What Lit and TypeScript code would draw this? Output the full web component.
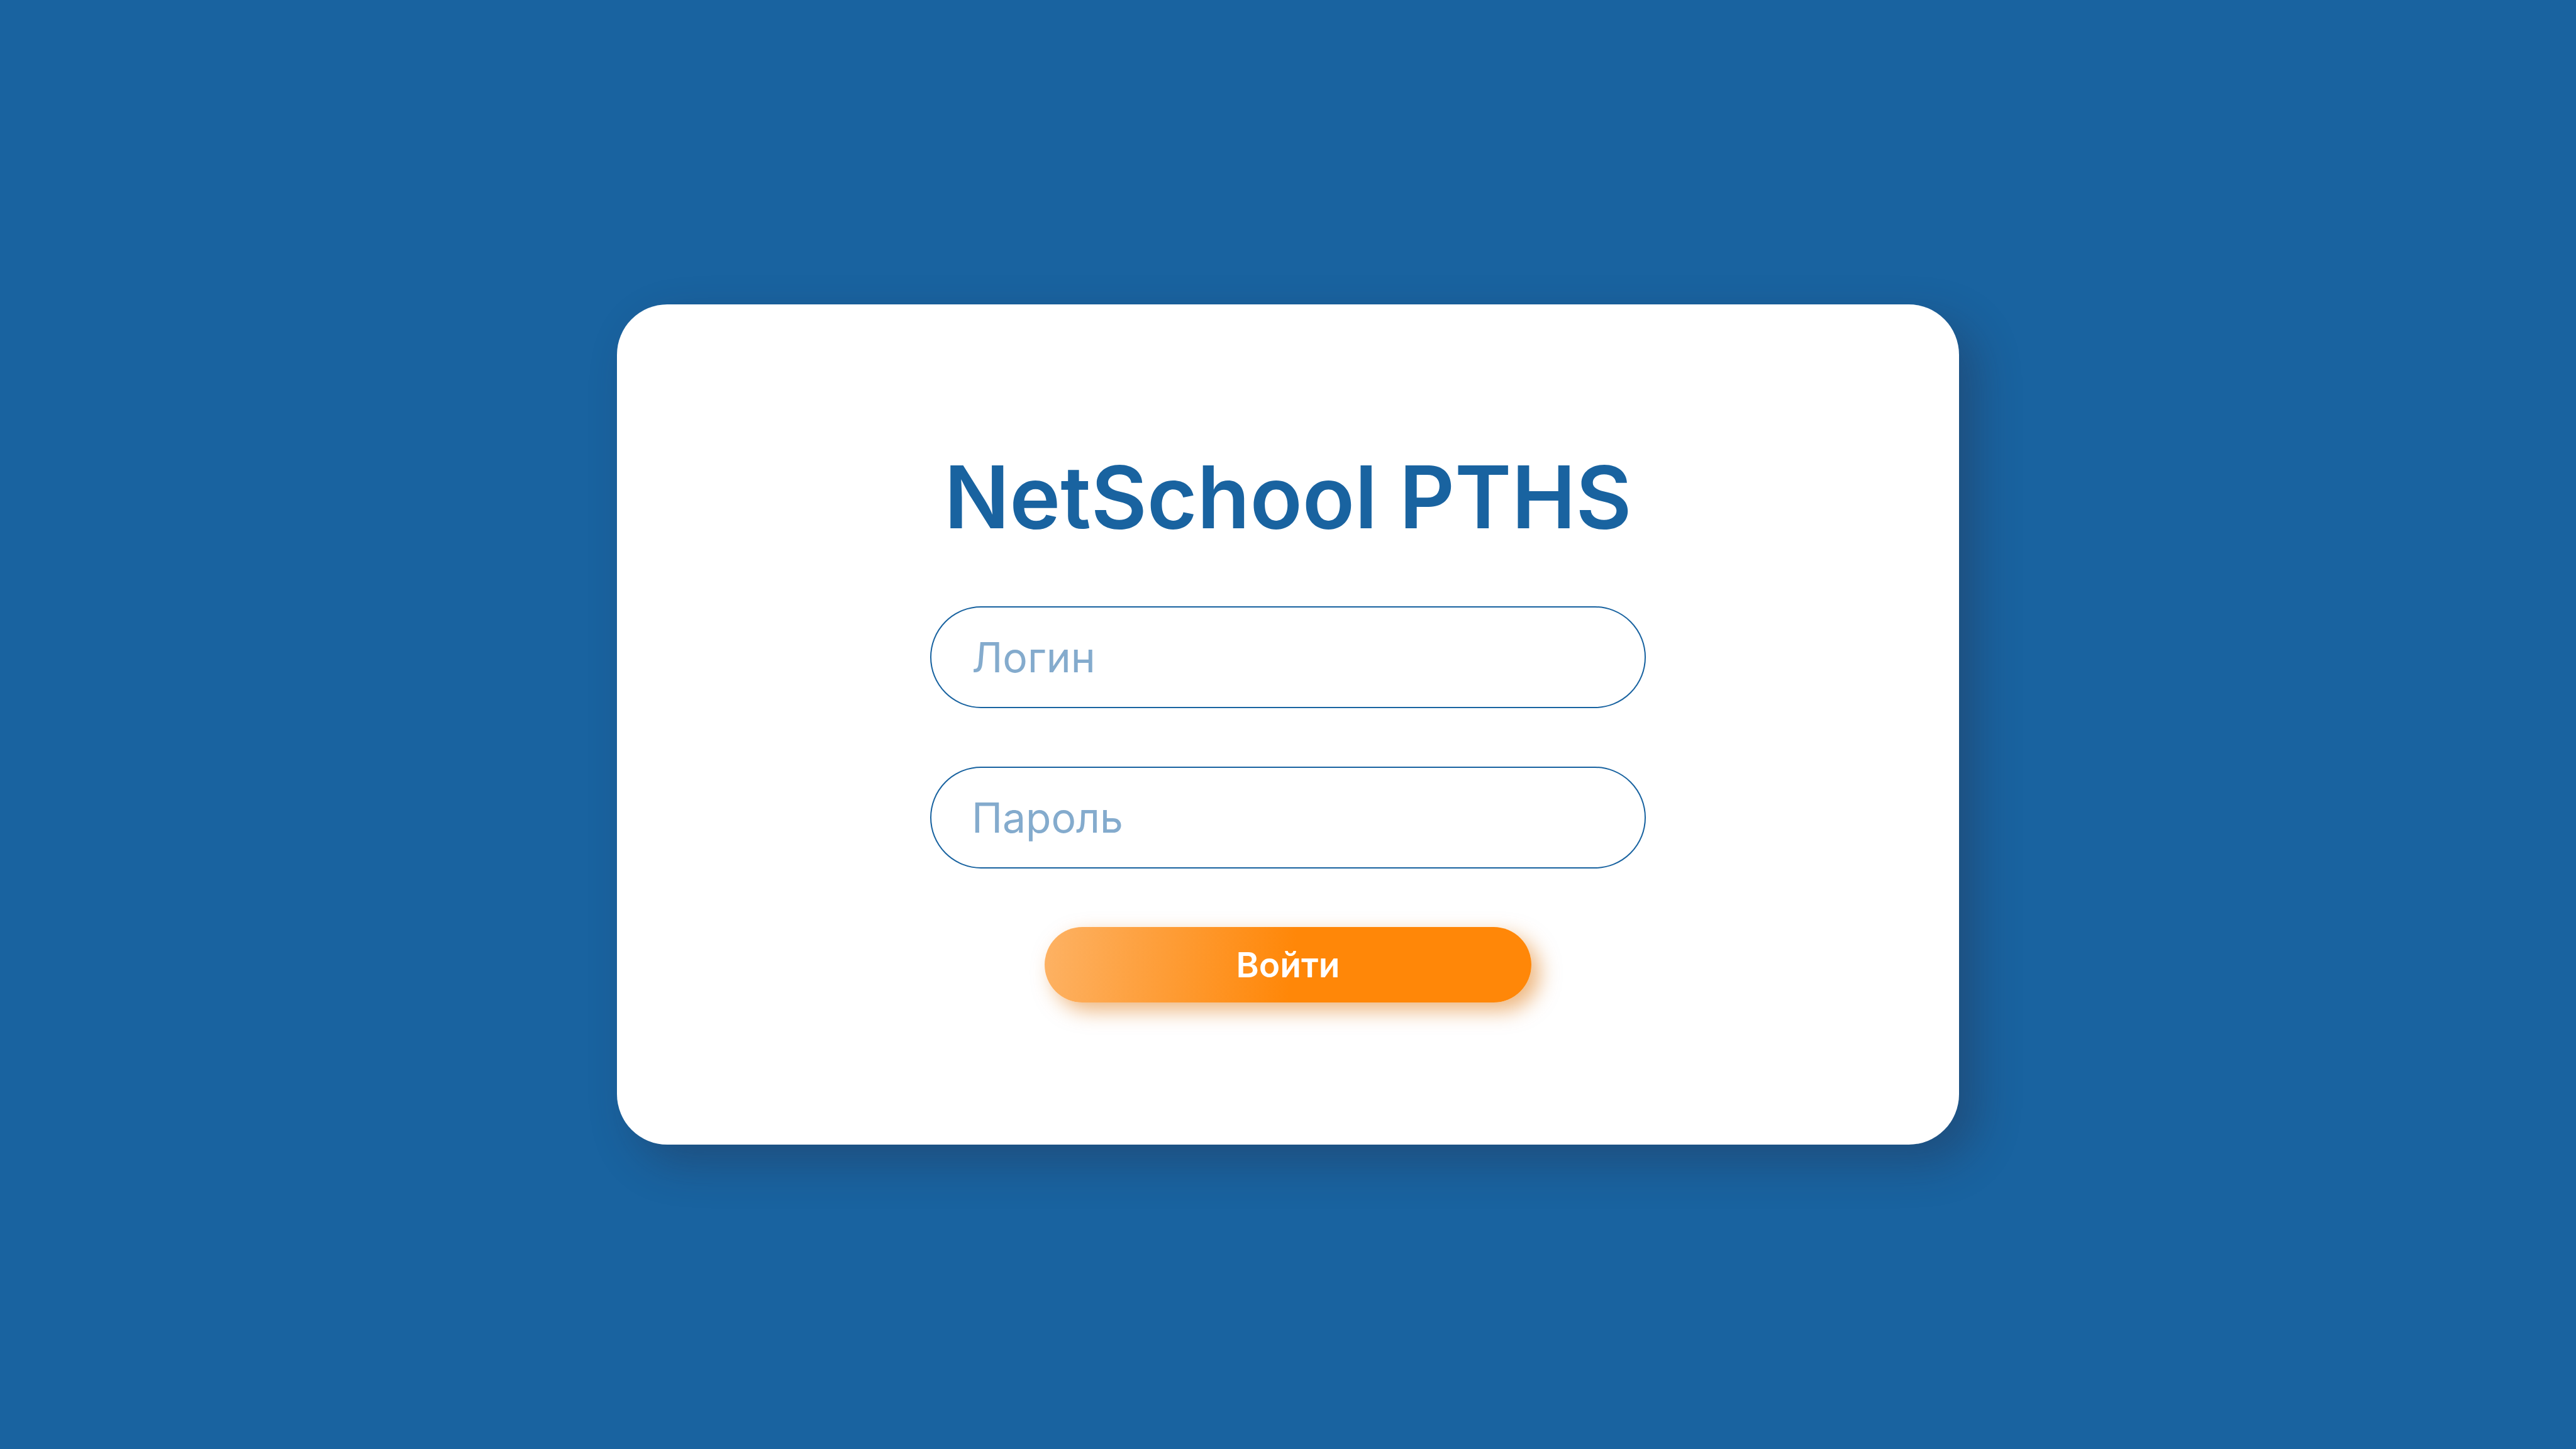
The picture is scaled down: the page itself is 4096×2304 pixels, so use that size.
import { LitElement, html, css } from "lit";
import { customElement, state } from "lit/decorators.js";

@customElement("app-root")
export class AppRoot extends LitElement {
  static styles = css`
    :host {
      --blue: #1963a0;
      --orange: #ff8708;
      display: grid;
      place-items: center;
      box-sizing: border-box;
      min-height: 100vh;
      padding: 80px;
      background: var(--blue);
      font-family: Inter, "Open Sans", "Liberation Sans", sans-serif;
    }

    .card {
      display: flex;
      flex-direction: column;
      align-items: center;
      gap: 93px;
      box-sizing: border-box;
      width: 100%;
      max-width: 2134px;
      padding: 226px 80px;
      border-radius: 80px;
      background: #fff;
      box-shadow: 28px 28px 70px rgba(42, 35, 55, 0.33);
    }

    .title {
      margin: 0;
      color: var(--blue);
      font-size: 137px;
      font-weight: 600;
      line-height: 161px;
      text-align: center;
    }

    .field {
      display: block;
      width: 100%;
      max-width: 1138px;
    }

    .input {
      display: block;
      box-sizing: border-box;
      width: 100%;
      height: 162px;
      margin: 0;
      padding: 0 64px;
      border: 2px solid var(--blue);
      border-radius: 81px;
      outline: none;
      background: #fff;
      color: var(--blue);
      font: 400 66px/80px Inter, "Open Sans", "Liberation Sans", sans-serif;
    }

    .input::placeholder {
      color: #84abcd;
      opacity: 1;
    }

    .input:focus-visible {
      box-shadow: 0 0 0 4px rgba(26, 99, 160, 0.3);
    }

    .submit {
      width: 100%;
      max-width: 774px;
      height: 120px;
      margin: 0;
      padding: 0;
      border: none;
      border-radius: 60px;
      background: linear-gradient(97deg, #fdb264 0%, var(--orange) 51%);
      box-shadow: 13px 13px 32px rgba(222, 112, 0, 0.5);
      color: #fff;
      cursor: pointer;
      font: 600 55px/68px Inter, "Open Sans", "Liberation Sans", sans-serif;
    }
  `;

  @state() private login = "";
  @state() private password = "";

  private onSubmit(event: Event) {
    event.preventDefault();
    this.dispatchEvent(
      new CustomEvent("login", { detail: { login: this.login, password: this.password } }),
    );
  }

  render() {
    return html`
      <form class="card" @submit=${this.onSubmit}>
        <h1 class="title">NetSchool PTHS</h1>
        <label class="field">
          <input
            class="input"
            type="text"
            placeholder="Логин"
            aria-label="Логин"
            autocomplete="username"
            .value=${this.login}
            @input=${(e: Event) => (this.login = (e.target as HTMLInputElement).value)}
          />
        </label>
        <label class="field">
          <input
            class="input"
            type="password"
            placeholder="Пароль"
            aria-label="Пароль"
            autocomplete="current-password"
            .value=${this.password}
            @input=${(e: Event) => (this.password = (e.target as HTMLInputElement).value)}
          />
        </label>
        <button class="submit" type="submit">Войти</button>
      </form>
    `;
  }
}
